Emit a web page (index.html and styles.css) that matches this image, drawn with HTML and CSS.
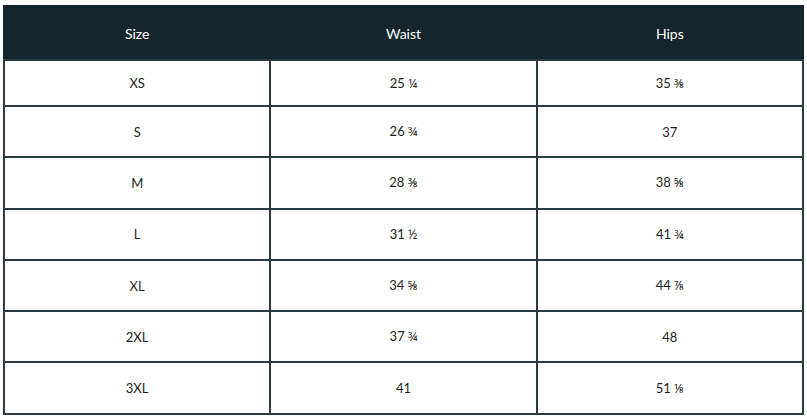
FILE: index.html
```html
<!DOCTYPE html>
<html>
<head>
<meta charset="utf-8">
<link rel="stylesheet" href="styles.css">
</head>
<body>
<table class="size-table">
  <thead>
    <tr class="head-row"><th>Size</th><th>Waist</th><th>Hips</th></tr>
  </thead>
  <tbody>
    <tr class="first-row"><td>XS</td><td>25 <span class="frac">¼</span></td><td>35 <span class="frac">⅜</span></td></tr>
    <tr><td>S</td><td>26 <span class="frac">¾</span></td><td>37</td></tr>
    <tr><td>M</td><td>28 <span class="frac">⅜</span></td><td>38 <span class="frac">⅝</span></td></tr>
    <tr><td>L</td><td>31 <span class="frac">½</span></td><td>41 <span class="frac">¾</span></td></tr>
    <tr><td>XL</td><td>34 <span class="frac">⅝</span></td><td>44 <span class="frac">⅞</span></td></tr>
    <tr><td>2XL</td><td>37 <span class="frac">¾</span></td><td>48</td></tr>
    <tr><td>3XL</td><td>41</td><td>51 <span class="frac">⅛</span></td></tr>
  </tbody>
</table>
</body>
</html>
```
FILE: styles.css
```css
html, body {
  margin: 0;
  padding: 0;
  background: #ffffff;
}
body {
  padding: 5px 3px 0 3px;
  font-family: "Lato", "Noto Sans", sans-serif;
}
.size-table {
  width: 801px;
  border-collapse: collapse;
  table-layout: fixed;
  color: #1b1f22;
  font-size: 13px;
}
.size-table th,
.size-table td {
  border: 2px solid #2b3b42;
  text-align: center;
  vertical-align: middle;
  padding: 0;
}
.size-table th {
  background: #13252d;
  color: #ffffff;
  font-weight: 400;
  font-size: 14px;
  height: 52px;
  border-color: #13252d;
  border-bottom-color: #2b3b42;
}
.size-table td {
  height: 49.3px;
}
.first-row td {
  height: 44px;
}
.frac {
  font-family: "Noto Sans", "DejaVu Sans", sans-serif;
  font-size: 12px;
}
```
